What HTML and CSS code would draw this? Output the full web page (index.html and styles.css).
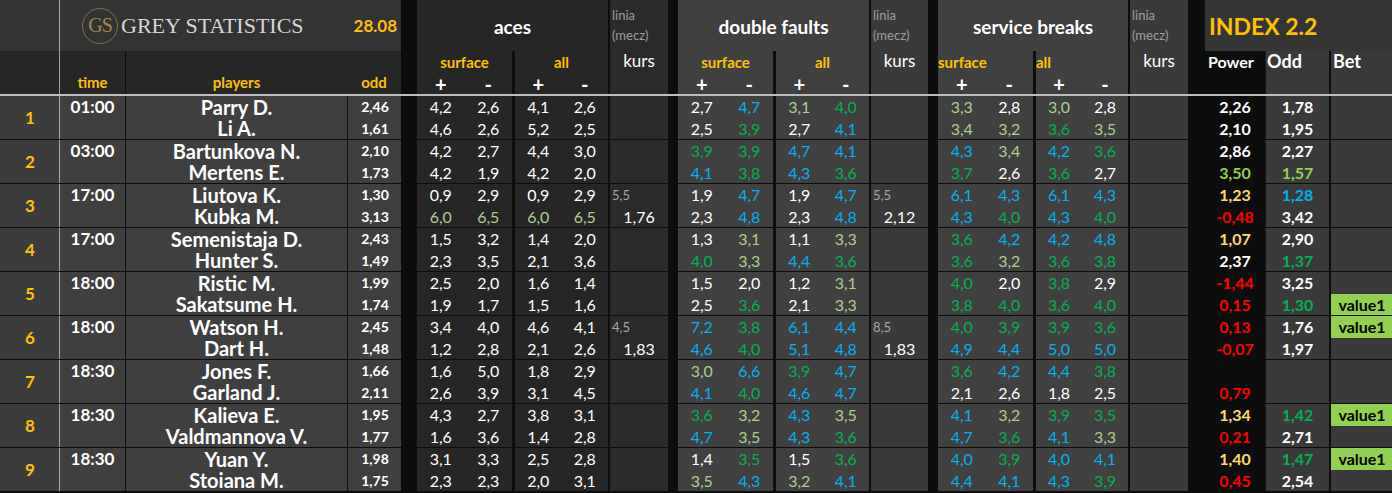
FILE: index.html
```html
<!DOCTYPE html>
<html lang="pl">
<head>
<meta charset="utf-8">
<title>Grey Statistics</title>
<link rel="stylesheet" href="styles.css">
</head>
<body>
<div class="sheet">
  <div class="head">
    <div class="hn1"></div>
    <div class="logo">
      <div class="gs">GS</div>
      <div class="brand">GREY STATISTICS</div>
      <div class="date">28.08</div>
    </div>
    <div class="hsep"></div>
    <div class="hg dark">
      <div class="ttl">aces</div>
      <div class="hq center"><span class="lab">surface</span><span class="pm">+</span><span class="pm">-</span></div>
      <div class="hq center"><span class="lab">all</span><span class="pm">+</span><span class="pm">-</span></div>
    </div>
    <div class="hk dark2"><span class="li">linia</span><span class="li">(mecz)</span><span class="kh">kurs</span></div>
    <div class="hsep"></div>
    <div class="hg light">
      <div class="ttl">double faults</div>
      <div class="hq center"><span class="lab">surface</span><span class="pm">+</span><span class="pm">-</span></div>
      <div class="hq center"><span class="lab">all</span><span class="pm">+</span><span class="pm">-</span></div>
    </div>
    <div class="hk mid"><span class="li">linia</span><span class="li">(mecz)</span><span class="kh">kurs</span></div>
    <div class="hsep"></div>
    <div class="hg light">
      <div class="ttl">service breaks</div>
      <div class="hq"><span class="lab">surface</span><span class="pm">+</span><span class="pm">-</span></div>
      <div class="hq"><span class="lab">all</span><span class="pm">+</span><span class="pm">-</span></div>
    </div>
    <div class="hk mid"><span class="li">linia</span><span class="li">(mecz)</span><span class="kh">kurs</span></div>
    <div class="hsep"></div>
    <div class="index">INDEX 2.2</div>
    <div class="hn2"></div>
    <div class="th">time</div>
    <div class="th tpl">players</div>
    <div class="th">odd</div>
    <div class="hpow">Power</div>
    <div class="hodd">Odd</div>
    <div class="hbet">Bet</div>
  </div>

  <div class="m">
    <div class="num">1</div>
    <div class="time"><span>01:00</span></div>
    <div class="pl"><span>Parry D.</span><span>Li A.</span></div>
    <div class="od"><span>2,46</span><span>1,61</span></div>
    <div class="sep"></div>
    <div class="grp dark"><div class="q"><span>4,2</span><span>2,6</span><span>4,6</span><span>2,6</span></div><div class="q"><span>4,1</span><span>2,6</span><span>5,2</span><span>2,5</span></div></div>
    <div class="ks dark2"></div>
    <div class="sep"></div>
    <div class="grp light"><div class="q"><span>2,7</span><span class="b">4,7</span><span>2,5</span><span class="g">3,9</span></div><div class="q"><span class="lg">3,1</span><span class="g">4,0</span><span>2,7</span><span class="b">4,1</span></div></div>
    <div class="ks mid"></div>
    <div class="sep"></div>
    <div class="grp light"><div class="q"><span class="lg">3,3</span><span>2,8</span><span class="lg">3,4</span><span class="lg">3,2</span></div><div class="q"><span class="lg">3,0</span><span>2,8</span><span class="g">3,6</span><span class="lg">3,5</span></div></div>
    <div class="ks mid"></div>
    <div class="sep"></div>
    <div class="pw"><span>2,26</span><span>2,10</span></div>
    <div class="o2"><span>1,78</span><span>1,95</span></div>
    <div class="bet"></div>
  </div>

  <div class="m">
    <div class="num">2</div>
    <div class="time"><span>03:00</span></div>
    <div class="pl"><span>Bartunkova N.</span><span>Mertens E.</span></div>
    <div class="od"><span>2,10</span><span>1,73</span></div>
    <div class="sep"></div>
    <div class="grp dark"><div class="q"><span>4,2</span><span>2,7</span><span>4,2</span><span>1,9</span></div><div class="q"><span>4,4</span><span>3,0</span><span>4,2</span><span>2,0</span></div></div>
    <div class="ks dark2"></div>
    <div class="sep"></div>
    <div class="grp light"><div class="q"><span class="g">3,9</span><span class="g">3,9</span><span class="b">4,1</span><span class="g">3,8</span></div><div class="q"><span class="b">4,7</span><span class="b">4,1</span><span class="b">4,3</span><span class="g">3,6</span></div></div>
    <div class="ks mid"></div>
    <div class="sep"></div>
    <div class="grp light"><div class="q"><span class="b">4,3</span><span class="lg">3,4</span><span class="g">3,7</span><span>2,6</span></div><div class="q"><span class="b">4,2</span><span class="g">3,6</span><span class="g">3,6</span><span>2,7</span></div></div>
    <div class="ks mid"></div>
    <div class="sep"></div>
    <div class="pw"><span>2,86</span><span class="lgb">3,50</span></div>
    <div class="o2"><span>2,27</span><span class="lgb">1,57</span></div>
    <div class="bet"></div>
  </div>

  <div class="m">
    <div class="num">3</div>
    <div class="time"><span>17:00</span></div>
    <div class="pl"><span>Liutova K.</span><span>Kubka M.</span></div>
    <div class="od"><span>1,30</span><span>3,13</span></div>
    <div class="sep"></div>
    <div class="grp dark"><div class="q"><span>0,9</span><span>2,9</span><span class="lg">6,0</span><span class="lg">6,5</span></div><div class="q"><span>0,9</span><span>2,9</span><span class="lg">6,0</span><span class="lg">6,5</span></div></div>
    <div class="ks dark2"><span class="ln">5,5</span><span>1,76</span></div>
    <div class="sep"></div>
    <div class="grp light"><div class="q"><span>1,9</span><span class="b">4,7</span><span>2,3</span><span class="b">4,8</span></div><div class="q"><span>1,9</span><span class="b">4,7</span><span>2,3</span><span class="b">4,8</span></div></div>
    <div class="ks mid"><span class="ln">5,5</span><span>2,12</span></div>
    <div class="sep"></div>
    <div class="grp light"><div class="q"><span class="b">6,1</span><span class="b">4,3</span><span class="b">4,3</span><span class="g">4,0</span></div><div class="q"><span class="b">6,1</span><span class="b">4,3</span><span class="b">4,3</span><span class="g">4,0</span></div></div>
    <div class="ks mid"></div>
    <div class="sep"></div>
    <div class="pw"><span class="y">1,23</span><span class="r">-0,48</span></div>
    <div class="o2"><span class="b">1,28</span><span>3,42</span></div>
    <div class="bet"></div>
  </div>

  <div class="m">
    <div class="num">4</div>
    <div class="time"><span>17:00</span></div>
    <div class="pl"><span>Semenistaja D.</span><span>Hunter S.</span></div>
    <div class="od"><span>2,43</span><span>1,49</span></div>
    <div class="sep"></div>
    <div class="grp dark"><div class="q"><span>1,5</span><span>3,2</span><span>2,3</span><span>3,5</span></div><div class="q"><span>1,4</span><span>2,0</span><span>2,1</span><span>3,6</span></div></div>
    <div class="ks dark2"></div>
    <div class="sep"></div>
    <div class="grp light"><div class="q"><span>1,3</span><span class="lg">3,1</span><span class="g">4,0</span><span class="lg">3,3</span></div><div class="q"><span>1,1</span><span class="lg">3,3</span><span class="b">4,4</span><span class="g">3,6</span></div></div>
    <div class="ks mid"></div>
    <div class="sep"></div>
    <div class="grp light"><div class="q"><span class="g">3,6</span><span class="b">4,2</span><span class="g">3,6</span><span class="lg">3,2</span></div><div class="q"><span class="b">4,2</span><span class="b">4,8</span><span class="g">3,6</span><span class="g">3,8</span></div></div>
    <div class="ks mid"></div>
    <div class="sep"></div>
    <div class="pw"><span class="y">1,07</span><span>2,37</span></div>
    <div class="o2"><span>2,90</span><span class="g">1,37</span></div>
    <div class="bet"></div>
  </div>

  <div class="m">
    <div class="num">5</div>
    <div class="time"><span>18:00</span></div>
    <div class="pl"><span>Ristic M.</span><span>Sakatsume H.</span></div>
    <div class="od"><span>1,99</span><span>1,74</span></div>
    <div class="sep"></div>
    <div class="grp dark"><div class="q"><span>2,5</span><span>2,0</span><span>1,9</span><span>1,7</span></div><div class="q"><span>1,6</span><span>1,4</span><span>1,5</span><span>1,6</span></div></div>
    <div class="ks dark2"></div>
    <div class="sep"></div>
    <div class="grp light"><div class="q"><span>1,5</span><span>2,0</span><span>2,5</span><span class="g">3,6</span></div><div class="q"><span>1,2</span><span class="lg">3,1</span><span>2,1</span><span class="lg">3,3</span></div></div>
    <div class="ks mid"></div>
    <div class="sep"></div>
    <div class="grp light"><div class="q"><span class="g">4,0</span><span>2,0</span><span class="g">3,8</span><span class="g">4,0</span></div><div class="q"><span class="g">3,8</span><span>2,9</span><span class="g">3,6</span><span class="g">4,0</span></div></div>
    <div class="ks mid"></div>
    <div class="sep"></div>
    <div class="pw"><span class="r">-1,44</span><span class="r">0,15</span></div>
    <div class="o2"><span>3,25</span><span class="g">1,30</span></div>
    <div class="bet"><span></span><span class="v">value1</span></div>
  </div>

  <div class="m">
    <div class="num">6</div>
    <div class="time"><span>18:00</span></div>
    <div class="pl"><span>Watson H.</span><span>Dart H.</span></div>
    <div class="od"><span>2,45</span><span>1,48</span></div>
    <div class="sep"></div>
    <div class="grp dark"><div class="q"><span>3,4</span><span>4,0</span><span>1,2</span><span>2,8</span></div><div class="q"><span>4,6</span><span>4,1</span><span>2,1</span><span>2,6</span></div></div>
    <div class="ks dark2"><span class="ln">4,5</span><span>1,83</span></div>
    <div class="sep"></div>
    <div class="grp light"><div class="q"><span class="b">7,2</span><span class="g">3,8</span><span class="b">4,6</span><span class="g">4,0</span></div><div class="q"><span class="b">6,1</span><span class="b">4,4</span><span class="b">5,1</span><span class="b">4,8</span></div></div>
    <div class="ks mid"><span class="ln">8,5</span><span>1,83</span></div>
    <div class="sep"></div>
    <div class="grp light"><div class="q"><span class="g">4,0</span><span class="g">3,9</span><span class="b">4,9</span><span class="b">4,4</span></div><div class="q"><span class="g">3,9</span><span class="g">3,6</span><span class="b">5,0</span><span class="b">5,0</span></div></div>
    <div class="ks mid"></div>
    <div class="sep"></div>
    <div class="pw"><span class="r">0,13</span><span class="r">-0,07</span></div>
    <div class="o2"><span>1,76</span><span>1,97</span></div>
    <div class="bet"><span class="v">value1</span><span></span></div>
  </div>

  <div class="m">
    <div class="num">7</div>
    <div class="time"><span>18:30</span></div>
    <div class="pl"><span>Jones F.</span><span>Garland J.</span></div>
    <div class="od"><span>1,66</span><span>2,11</span></div>
    <div class="sep"></div>
    <div class="grp dark"><div class="q"><span>1,6</span><span>5,0</span><span>2,6</span><span>3,9</span></div><div class="q"><span>1,8</span><span>2,9</span><span>3,1</span><span>4,5</span></div></div>
    <div class="ks dark2"></div>
    <div class="sep"></div>
    <div class="grp light"><div class="q"><span class="lg">3,0</span><span class="b">6,6</span><span class="b">4,1</span><span class="g">4,0</span></div><div class="q"><span class="g">3,9</span><span class="b">4,7</span><span class="b">4,6</span><span class="b">4,7</span></div></div>
    <div class="ks mid"></div>
    <div class="sep"></div>
    <div class="grp light"><div class="q"><span class="g">3,6</span><span class="b">4,2</span><span>2,1</span><span>2,6</span></div><div class="q"><span class="b">4,4</span><span class="g">3,8</span><span>1,8</span><span>2,5</span></div></div>
    <div class="ks mid"></div>
    <div class="sep"></div>
    <div class="pw"><span></span><span class="r">0,79</span></div>
    <div class="o2"></div>
    <div class="bet"></div>
  </div>

  <div class="m">
    <div class="num">8</div>
    <div class="time"><span>18:30</span></div>
    <div class="pl"><span>Kalieva E.</span><span>Valdmannova V.</span></div>
    <div class="od"><span>1,95</span><span>1,77</span></div>
    <div class="sep"></div>
    <div class="grp dark"><div class="q"><span>4,3</span><span>2,7</span><span>1,6</span><span>3,6</span></div><div class="q"><span>3,8</span><span>3,1</span><span>1,4</span><span>2,8</span></div></div>
    <div class="ks dark2"></div>
    <div class="sep"></div>
    <div class="grp light"><div class="q"><span class="g">3,6</span><span class="lg">3,2</span><span class="b">4,7</span><span class="lg">3,5</span></div><div class="q"><span class="b">4,3</span><span class="lg">3,5</span><span class="b">4,3</span><span class="g">3,6</span></div></div>
    <div class="ks mid"></div>
    <div class="sep"></div>
    <div class="grp light"><div class="q"><span class="b">4,1</span><span class="lg">3,2</span><span class="b">4,7</span><span class="g">3,6</span></div><div class="q"><span class="g">3,9</span><span class="g">3,5</span><span class="b">4,1</span><span class="lg">3,3</span></div></div>
    <div class="ks mid"></div>
    <div class="sep"></div>
    <div class="pw"><span class="y">1,34</span><span class="r">0,21</span></div>
    <div class="o2"><span class="g">1,42</span><span>2,71</span></div>
    <div class="bet"><span class="v">value1</span><span></span></div>
  </div>

  <div class="m">
    <div class="num">9</div>
    <div class="time"><span>18:30</span></div>
    <div class="pl"><span>Yuan Y.</span><span>Stoiana M.</span></div>
    <div class="od"><span>1,98</span><span>1,75</span></div>
    <div class="sep"></div>
    <div class="grp dark"><div class="q"><span>3,1</span><span>3,3</span><span>2,3</span><span>2,3</span></div><div class="q"><span>2,5</span><span>2,8</span><span>2,0</span><span>3,1</span></div></div>
    <div class="ks dark2"></div>
    <div class="sep"></div>
    <div class="grp light"><div class="q"><span>1,4</span><span class="g">3,5</span><span class="lg">3,5</span><span class="b">4,3</span></div><div class="q"><span>1,5</span><span class="g">3,6</span><span class="lg">3,2</span><span class="b">4,1</span></div></div>
    <div class="ks mid"></div>
    <div class="sep"></div>
    <div class="grp light"><div class="q"><span class="b">4,0</span><span class="g">3,9</span><span class="b">4,4</span><span class="b">4,1</span></div><div class="q"><span class="b">4,0</span><span class="b">4,1</span><span class="b">4,3</span><span class="g">3,9</span></div></div>
    <div class="ks mid"></div>
    <div class="sep"></div>
    <div class="pw"><span class="y">1,40</span><span class="r">0,45</span></div>
    <div class="o2"><span class="g">1,47</span><span>2,54</span></div>
    <div class="bet"><span class="v">value1</span><span></span></div>
  </div>
</div>
</body>
</html>
```

FILE: styles.css
```css
* { box-sizing: border-box; margin: 0; padding: 0; }

html, body {
  background: #0d0d0d;
}

body {
  width: 1392px;
  height: 493px;
  overflow: hidden;
  font-family: Lato, "Liberation Sans", sans-serif;
  color: #ffffff;
}

.sheet {
  --cols: 60px 65px 222px 54px 16px 191px 60px 10px 191px 59px 10px 190px 60px 17px 60px 64px 63px;
  --line: #0d0d0d;
}

/* ---------- header ---------- */
.head {
  display: grid;
  grid-template-columns: var(--cols);
  grid-template-rows: 51px 43px;
  border-bottom: 2px solid #bdbdbd;
}

.hn1 { background: #333333; border-right: 1px solid #a6a6a6; }
.hn2 { background: #262626; border-right: 1px solid #a6a6a6; }

.logo {
  grid-column: span 3;
  background: #333333;
  display: flex;
  align-items: center;
  padding: 0 4px 0 22px;
}

.gs {
  width: 36px;
  height: 36px;
  border: 1.5px solid #8d6e3c;
  border-radius: 50%;
  display: flex;
  align-items: center;
  justify-content: center;
  font-family: "Liberation Serif", serif;
  font-size: 20px;
  color: #a5844c;
  letter-spacing: -1px;
  flex: none;
}

.brand {
  margin-left: 3px;
  font-family: "Liberation Serif", serif;
  font-size: 22px;
  letter-spacing: 0;
  color: #d6d6d6;
  padding-top: 1px;
}

.date {
  margin-left: auto;
  font-size: 17px;
  font-weight: 700;
  color: #ffc000;
}

.hsep { grid-row: span 2; background: var(--line); }

.hg {
  grid-row: span 2;
  display: grid;
  grid-template-columns: 95px 1fr;
  grid-template-rows: 51px 43px;
}

.ttl {
  grid-column: 1 / -1;
  display: flex;
  align-items: center;
  justify-content: center;
  font-size: 19px;
  font-weight: 700;
  padding-top: 1px;
}

.hq {
  display: grid;
  grid-template-columns: 1fr 1fr;
  grid-template-rows: 22px 21px;
}
.hq + .hq { border-left: 3px solid var(--line); }

.lab {
  grid-column: 1 / -1;
  font-size: 15px;
  font-weight: 700;
  color: #ffc000;
  line-height: 22px;
}
.hq.center .lab { text-align: center; }

.pm {
  text-align: center;
  font-size: 20px;
  font-weight: 700;
  line-height: 21px;
  padding-top: 1px;
}

.hk {
  grid-row: span 2;
  border-left: 2px solid var(--line);
  display: flex;
  flex-direction: column;
  padding: 5px 0 0 2px;
}
.li {
  font-size: 13px;
  line-height: 20px;
  color: #9d9d9d;
}
.kh {
  margin-top: 5px;
  font-size: 17px;
  line-height: 22px;
  text-align: center;
  padding-right: 2px;
}

.index {
  grid-column: span 3;
  background: #353535;
  display: flex;
  align-items: center;
  padding: 1px 0 0 4px;
  font-size: 23px;
  font-weight: 700;
  color: #ffc000;
}

.th {
  background: #262626;
  display: flex;
  align-items: flex-end;
  justify-content: center;
  padding-bottom: 3px;
  font-size: 15px;
  font-weight: 700;
  line-height: 18px;
  color: #ffc000;
}
.tpl { border-left: 1px solid var(--line); }

.hpow, .hodd, .hbet {
  font-weight: 700;
  line-height: 20px;
}
.hpow { background: #0d0d0d; font-size: 16px; padding: 1px 0 0 3px; }
.hodd { background: #3a3a3a; font-size: 18px; padding-left: 1px; border-left: 1px solid #1a1a1a; }
.hbet { background: #3a3a3a; font-size: 18px; padding-left: 2px; border-left: 2px solid var(--line); }

/* ---------- match rows ---------- */
.m {
  display: grid;
  grid-template-columns: var(--cols);
  height: 44px;
  border-bottom: 1px solid var(--line);
}

.m > div {
  display: grid;
  grid-template-rows: 22px 21px;
}
.m span { display: block; }

.num {
  background: #3c3c3c;
  border-right: 1px solid #a6a6a6;
  align-items: center;
  justify-items: center;
  grid-template-rows: 1fr !important;
  font-size: 17px;
  font-weight: 700;
  color: #ffc000;
  padding-left: 1px;
}

.time {
  background: #3f3f3f;
  text-align: center;
  font-size: 17px;
  font-weight: 700;
  line-height: 22px;
}

.pl {
  background: #3f3f3f;
  border-left: 1px solid var(--line);
  text-align: center;
  font-size: 20px;
  font-weight: 700;
  line-height: 22px;
}
.pl span:last-child { line-height: 21px; }

.od {
  background: #3f3f3f;
  border-left: 1px solid var(--line);
  text-align: center;
  font-size: 14px;
  font-weight: 700;
  line-height: 22px;
  padding-left: 1px;
}

.sep { background: var(--line); }

.dark { background: #262626; }
.dark2 { background: #2a2a2a; }
.mid { background: #3a3a3a; }
.light { background: #404040; }

.m > .grp {
  grid-template-rows: 1fr;
  grid-template-columns: 95px 1fr;
}
.q {
  display: grid;
  grid-template-columns: 1fr 1fr;
  grid-template-rows: 22px 21px;
  font-size: 16px;
  line-height: 22px;
  text-align: center;
}
.q span:nth-child(n+3) { line-height: 21px; }
.q + .q { border-left: 3px solid var(--line); }

.ks {
  border-left: 2px solid var(--line);
  font-size: 16px;
  line-height: 22px;
  text-align: center;
}
.ks .ln {
  text-align: left;
  padding-left: 2px;
  font-size: 13px;
  color: #a6a6a6;
}

.pw, .o2 {
  text-align: center;
  font-size: 16px;
  font-weight: 700;
  line-height: 22px;
}
.pw { background: #0d0d0d; }
.o2 { background: #3a3a3a; border-left: 1px solid #1a1a1a; }

.bet {
  background: #3a3a3a;
  border-left: 2px solid var(--line);
}
.bet .v {
  background: #92d050;
  color: #000000;
  font-size: 16px;
  font-weight: 700;
  line-height: 21px;
  text-align: center;
  padding-left: 1px;
}

/* ---------- colours ---------- */
.lg { color: #a9d08e; }
.g { color: #00b050; }
.b { color: #00b0f0; }
.r { color: #ff0000; }
.y { color: #ffd966; }
.lgb { color: #92d050; }
```
